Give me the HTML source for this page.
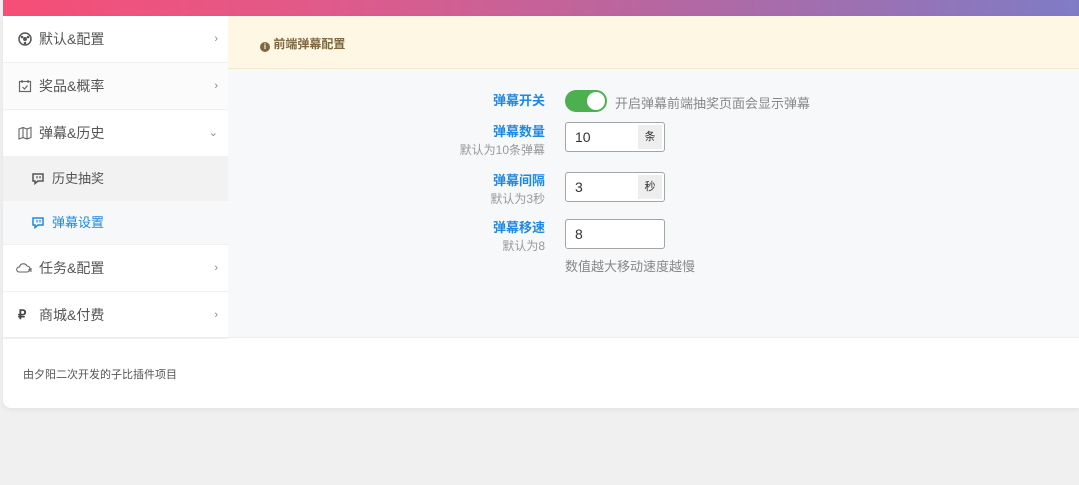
<!DOCTYPE html>
<html><head><meta charset="utf-8"><style>
*{margin:0;padding:0;box-sizing:border-box}
body{width:1079px;height:485px;background:#f0f0f0;font-family:"Liberation Sans","Noto Sans CJK SC",sans-serif;overflow:hidden;position:relative}
.top{position:absolute;left:3px;top:0;width:1076px;height:16px;background:linear-gradient(90deg,#f64e76 0%,#e05a8a 30%,#b866a0 60%,#7f7cc6 100%)}
.card{position:absolute;left:3px;top:16px;width:1076px;height:392px;background:#fff;border-radius:0 0 0 8px;box-shadow:0 2px 6px rgba(0,0,0,.06)}
.side{position:absolute;left:0;top:0;width:225px;height:321px}
.it{height:47px;border-bottom:1px solid #f0f0f0;position:relative;font-size:14px;color:#555;line-height:46px;padding-left:36px}
.it .ic{position:absolute;left:15px;top:16px;width:14px;height:14px}
.it .ar{position:absolute;right:10px;top:0;color:#888;font-size:11px}
.sub{height:44px;line-height:44px;font-size:13px;color:#555;padding-left:49px;position:relative}
.sub .ic{position:absolute;left:29px;top:16px}
.main{position:absolute;left:225px;top:0;width:851px;height:321px;background:#f7f8fa}
.hd{height:53px;background:#fdf7e3;border-bottom:1px solid #f3e9cc;font-size:12px;color:#7d6840;font-weight:bold;line-height:56px;padding-left:32px}
.row{position:absolute;left:0;width:851px}
.lb{position:absolute;right:534px;text-align:right;white-space:nowrap}
.lb b{display:block;color:#1e88e5;font-size:13px;font-weight:bold;line-height:17px}
.lb i{display:block;font-style:normal;color:#999;font-size:12px;line-height:20px}
.inp{position:absolute;left:337px;width:100px;height:30px;border:1px solid #a5a5a5;border-radius:3px;background:#fff;font-size:14px;color:#333;line-height:28px;padding-left:9px}
.inp span{position:absolute;right:2px;top:2px;width:24px;height:24px;background:#eee;font-size:11px;line-height:24px;text-align:center}
.foot{position:absolute;left:20px;top:350px;font-size:11px;color:#555}
</style></head><body>
<div class="top"></div>
<div class="card">
<div class="side">
<div class="it"><svg class="ic" viewBox="0 0 14 14"><circle cx="7" cy="7" r="6" fill="none" stroke="#555" stroke-width="1.5"/><circle cx="7" cy="7" r="2" fill="#555"/><circle cx="4" cy="5" r="1.3" fill="#555"/><circle cx="10" cy="5" r="1.3" fill="#555"/><circle cx="7" cy="11" r="1.3" fill="#555"/></svg>默认&amp;配置<span class="ar">›</span></div>
<div class="it" style="background:#fbfbfc"><svg class="ic" viewBox="0 0 14 14"><rect x="1.5" y="2.5" width="11" height="10" fill="none" stroke="#666" stroke-width="1.2"/><path d="M4 1v3M10 1v3M4.5 8l2 2 3-3.5" fill="none" stroke="#666" stroke-width="1.2"/></svg>奖品&amp;概率<span class="ar">›</span></div>
<div class="it"><svg class="ic" viewBox="0 0 14 14"><path d="M1 3l4-1.5 4 1.5 4-1.5v10l-4 1.5-4-1.5-4 1.5zM5 1.5v10M9 3v10" fill="none" stroke="#666" stroke-width="1.1"/></svg>弹幕&amp;历史<span class="ar">⌄</span></div>
<div class="sub" style="background:#f2f2f2"><svg class="ic" width="12" height="12" viewBox="0 0 12 12"><path d="M1 1h10v7H6l-3 2.5V8H1z" fill="none" stroke="#555" stroke-width="1.5"/><path d="M5 3v2.5M8 3v2.5" stroke="#555" stroke-width="1.2"/></svg>历史抽奖</div>
<div class="sub" style="background:#f7f8fa;color:#1e88e5;border-bottom:1px solid #f0f0f0"><svg class="ic" width="12" height="12" viewBox="0 0 12 12"><path d="M1 1h10v7H6l-3 2.5V8H1z" fill="none" stroke="#1e88e5" stroke-width="1.5"/><path d="M5 3v2.5M8 3v2.5" stroke="#1e88e5" stroke-width="1.2"/></svg>弹幕设置</div>
<div class="it"><svg class="ic" viewBox="0 0 16 14" style="width:16px;left:13px"><path d="M3 11h8a3 3 0 0 0 0-6 4 4 0 0 0-7.5 1A2.5 2.5 0 0 0 3 11z" fill="none" stroke="#666" stroke-width="1.1"/><path d="M13 8v2M15 7v4" stroke="#666"/></svg>任务&amp;配置<span class="ar">›</span></div>
<div class="it"><span class="ic" style="font-size:13px;line-height:14px;color:#444;font-weight:bold">₽</span>商城&amp;付费<span class="ar">›</span></div>
</div>
<div class="main">
<div class="hd"><span style="display:inline-block;width:10px;height:10px;border-radius:50%;background:#7d6840;color:#fdf7e3;font-size:8px;line-height:10px;text-align:center;vertical-align:-1px">i</span> 前端弹幕配置</div>
<div class="row" style="top:76px"><div class="lb"><b>弹幕开关</b></div>
<div style="position:absolute;left:337px;top:-2px;width:42px;height:22px;border-radius:11px;background:#4cb050"><div style="position:absolute;right:2px;top:2px;width:18px;height:18px;border-radius:50%;background:#fff"></div></div>
<div style="position:absolute;left:387px;top:1px;font-size:13px;color:#888">开启弹幕前端抽奖页面会显示弹幕</div></div>
<div class="row" style="top:107px"><div class="lb"><b>弹幕数量</b><i>默认为10条弹幕</i></div><div class="inp" style="top:-1px">10<span>条</span></div></div>
<div class="row" style="top:156px"><div class="lb"><b>弹幕间隔</b><i>默认为3秒</i></div><div class="inp">3<span>秒</span></div></div>
<div class="row" style="top:203px"><div class="lb"><b>弹幕移速</b><i>默认为8</i></div><div class="inp">8</div>
<div style="position:absolute;left:337px;top:37px;font-size:13px;color:#888">数值越大移动速度越慢</div></div>
</div>
<div style="position:absolute;left:0;top:321px;width:1076px;border-top:1px solid #eee"></div>
<div class="foot">由夕阳二次开发的子比插件项目</div>
</div>
</body></html>
